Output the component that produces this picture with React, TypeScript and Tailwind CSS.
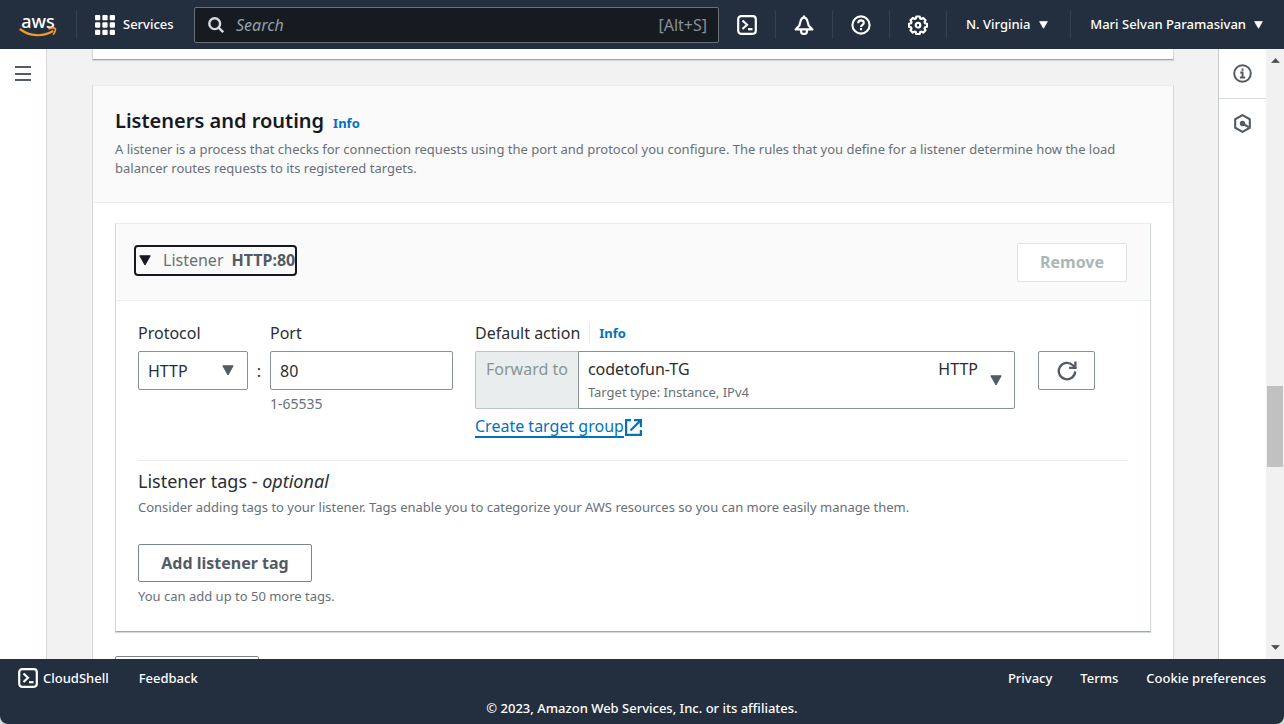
import React from 'react'

type IconProps = { className?: string }

function CloudShellIcon({ className }: IconProps) {
  return (
    <svg viewBox="0 0 20 20" className={className} fill="none" stroke="currentColor" strokeWidth="2.2" aria-hidden="true">
      <rect x="1.2" y="1.2" width="17.6" height="17.6" rx="3" />
      <path d="M5.5 5.500 10 9.800 5.500 14" />
      <path d="M11 14.200h4.500" />
    </svg>
  )
}

function BellIcon({ className }: IconProps) {
  return (
    <svg viewBox="0 0 20 20" className={className} fill="none" stroke="currentColor" strokeWidth="2.2" strokeLinejoin="round" aria-hidden="true">
      <path d="M10 0.500v2" />
      <path d="M10 2.600C7.600 2.600 6.900 4.400 6.300 7L5.400 10.400 1.600 14.400h16.800l-3.800-4L13.700 7C13.100 4.400 12.400 2.600 10 2.600Z" />
      <path d="M7 15v1a3 3 0 0 0 6 0v-1" />
    </svg>
  )
}

function HelpIcon({ className }: IconProps) {
  return (
    <svg viewBox="0 0 20 20" className={className} fill="none" stroke="currentColor" strokeWidth="2.1" aria-hidden="true">
      <circle cx="10" cy="10" r="8.600" />
      <path d="M7.200 8.200C7.200 6.400 8.400 5.400 10 5.400s2.800 1 2.800 2.600c0 1.800-2.800 2-2.800 4" />
      <path d="M10 13v2.200" />
    </svg>
  )
}

function GearIcon({ className }: IconProps) {
  return (
    <svg viewBox="0 0 20 20" className={className} fill="none" stroke="currentColor" strokeWidth="2.2" strokeLinejoin="round" aria-hidden="true">
      <path d="M8.300 1.500h3.400l.5 2 1.200.5 1.800-1 2.300 2.300-1 1.800.5 1.200 2 .5v2.900l-2 .6-.5 1.200 1 1.800-2.300 2.300-1.800-1-1.200.5-.5 2H8.300l-.5-2-1.200-.5-1.800 1-2.300-2.300 1-1.800-.5-1.200-2-.6V8.800l2-.5.5-1.200-1-1.800L4.800 3l1.800 1 1.200-.5Z" />
      <circle cx="10" cy="10.200" r="2.300" />
    </svg>
  )
}

function SearchIcon({ className }: IconProps) {
  return (
    <svg viewBox="0 0 16 16" className={className} fill="none" stroke="currentColor" strokeWidth="2.4" aria-hidden="true">
      <circle cx="6.700" cy="6.700" r="5.400" />
      <path d="m10.600 10.600 4.600 4.600" />
    </svg>
  )
}

function GridIcon({ className }: IconProps) {
  const cells = [0, 7, 14]
  return (
    <svg viewBox="0 0 19 19" className={className} fill="currentColor" aria-hidden="true">
      {cells.map(y => cells.map(x => <rect key={`${x}-${y}`} x={x} y={y} width="5" height="5" rx="1" />))}
    </svg>
  )
}

function Caret({ className }: IconProps) {
  return (
    <svg viewBox="0 0 12 11" preserveAspectRatio="none" className={className} fill="currentColor" stroke="currentColor" strokeLinejoin="round" aria-hidden="true">
      <path d="M0.800 0.800h10.400L6 10Z" />
    </svg>
  )
}

function InfoIcon({ className }: IconProps) {
  return (
    <svg viewBox="0 0 20 20" className={className} fill="none" stroke="currentColor" strokeWidth="2.100" aria-hidden="true">
      <circle cx="10" cy="10" r="8.700" />
      <path d="M10 4.800v2.400M7.600 9H10v5M7.200 14.200h5.600" />
    </svg>
  )
}

function HexagonIcon({ className }: IconProps) {
  return (
    <svg viewBox="0 0 20 20" className={className} fill="none" stroke="currentColor" strokeWidth="2.200" strokeLinejoin="round" aria-hidden="true">
      <path d="M10 1.200 17.700 5.500v9L10 18.800 2.300 14.500v-9Z" />
      <circle cx="10" cy="10" r="2.800" fill="currentColor" stroke="none" />
      <path d="m10 10 6.500 3.800" strokeWidth="2.400" />
    </svg>
  )
}

function RefreshIcon({ className }: IconProps) {
  return (
    <svg viewBox="0 0 20 20" className={className} fill="none" stroke="currentColor" strokeWidth="2.300" aria-hidden="true">
      <path d="M18.200 10.400A8.200 8.200 0 1 1 15.800 4.300L18 6.500" />
      <path d="M18.400 0.500v6.300h-6.300" />
    </svg>
  )
}

function ExternalIcon({ className }: IconProps) {
  return (
    <svg viewBox="0 0 17 17" className={className} fill="none" stroke="currentColor" strokeWidth="2.200" aria-hidden="true">
      <path d="M6 1.100H1.100v14.800h14.800V11" />
      <path d="M9 1.100h6.900V8M15.900 1.100 5.500 11.500" />
    </svg>
  )
}

function AwsLogo() {
  return (
    <span className="flex flex-col items-center">
      <span className="text-lg leading-5 font-medium">aws</span>
      <svg viewBox="0 0 38 11" className="-mt-1 h-[11px] w-[38px]" fill="none" stroke="#f29b26" strokeLinecap="round" aria-hidden="true">
        <path d="M1.500 2.500c9.500 7 22.500 7.600 32 1.800" strokeWidth="2.200" />
        <path d="M30 1.800c2.500-.9 5.500-.9 6.300-.2.500.8-.2 3.600-1.900 5.600" strokeWidth="1.600" />
      </svg>
    </span>
  )
}

const NAV_ACTIONS = [
  { label: 'CloudShell', Icon: CloudShellIcon },
  { label: 'Notifications', Icon: BellIcon },
  { label: 'Help', Icon: HelpIcon },
  { label: 'Settings', Icon: GearIcon }
]

function TopNav() {
  return (
    <header className="flex h-[49px] shrink-0 items-center bg-[#232f3e] text-[13px] whitespace-nowrap text-white">
      <a href="#home" className="flex h-7 w-[76px] shrink-0 items-center justify-center"><AwsLogo /></a>
      <button className="flex h-7 w-[118px] shrink-0 items-center gap-2 border-l border-[#354150] pl-[18px] font-medium">
        <GridIcon className="size-5" />
        Services
      </button>
      <label className="flex h-9 max-w-[525px] flex-1 items-center gap-3 rounded-xs border border-[#687078] bg-[#161b22] pr-[11px] pl-[13px] text-[#d5dbdb]">
        <SearchIcon className="size-4 shrink-0" />
        <input
          type="search"
          aria-label="Search"
          placeholder="Search"
          className="min-w-0 flex-1 bg-transparent text-base italic outline-none placeholder:text-[#95a0a3]"
        />
        <span className="text-base text-[#879196]">[Alt+S]</span>
      </label>
      <div className="flex shrink-0">
        {NAV_ACTIONS.map(({ label, Icon }) => (
          <button key={label} aria-label={label} className="flex h-7 w-[57px] items-center justify-center border-r border-[#354150]">
            <Icon className="size-5" />
          </button>
        ))}
      </div>
      <button className="flex h-7 items-center gap-2 px-[19px] font-medium">
        N. Virginia
        <Caret className="h-2 w-[9px]" />
      </button>
      <button className="ml-auto flex h-7 items-center gap-2 border-l border-[#354150] pr-[21px] pl-[19px] font-medium">
        Mari Selvan Paramasivan
        <Caret className="h-2 w-[9px]" />
      </button>
    </header>
  )
}

function ListenerForm() {
  return (
    <div className="flex items-start border-b border-[#eaeded] pb-[22px]">
      <div className="w-[110px]">
        <label htmlFor="protocol" className="block text-base leading-5">Protocol</label>
        <div className="relative mt-2">
          <select id="protocol" className="h-[39px] w-full appearance-none rounded-xs border border-[#879196] bg-white px-[9px] text-base">
            <option>HTTP</option>
          </select>
          <Caret className="pointer-events-none absolute top-[14px] right-[14px] h-[11px] w-3 text-[#545b64]" />
        </div>
      </div>
      <span className="mt-7 w-[22px] text-center text-base leading-10">:</span>
      <div className="w-[183px]">
        <label htmlFor="port" className="block text-base leading-5">Port</label>
        <input id="port" defaultValue="80" className="mt-2 h-[39px] w-full rounded-xs border border-[#879196] px-[9px] text-base" />
        <p className="mt-1 text-sm text-[#687078]">1-65535</p>
      </div>
      <div className="ml-[22px] flex-1">
        <div className="flex items-center leading-5">
          <span id="action-label" className="text-base leading-5">Default action</span>
          <a href="#action-info" className="ml-[9px] border-l border-[#eaeded] pl-[9px] text-[13px] leading-5 font-bold text-[#0073bb]">Info</a>
        </div>
        <div className="mt-2 flex h-[58px]">
          <span className="rounded-l-xs border border-r-0 border-[#bcc5c5] bg-[#eaeded] px-[10px] pt-[5px] text-base text-[#879596]">
            Forward to
          </span>
          <button
            aria-labelledby="action-label"
            aria-haspopup="listbox"
            className="flex flex-1 items-center rounded-r-xs border border-[#879196] pr-3 pl-[9px] text-left"
          >
            <span className="flex-1">
              <span className="flex justify-between text-base">
                <span>codetofun-TG</span>
                <span>HTTP</span>
              </span>
              <span className="block text-[13px] leading-[22px] text-[#687078]">Target type: Instance, IPv4</span>
            </span>
            <Caret className="ml-3 h-[11px] w-3 text-[#545b64]" />
          </button>
        </div>
        <a href="#target-groups" className="mt-[7px] inline-flex items-center gap-px text-base text-[#0073bb]">
          <span className="border-b-2 border-[#0073bb] leading-5">Create target group</span>
          <ExternalIcon className="size-[17px]" />
        </a>
      </div>
      <div className="mt-7 ml-[23px] w-[89px]">
        <button aria-label="Refresh target groups" className="flex h-[39px] w-[57px] items-center justify-center rounded-xs border border-[#879196] text-[#545b64]">
          <RefreshIcon className="size-5" />
        </button>
      </div>
    </div>
  )
}

function ListenerCard() {
  return (
    <section className="border border-t-[#eaeded] border-r-[#d5dbdb] border-b-[#a1a8a8] border-l-[#d5dbdb] bg-white shadow-[0_1px_1px_#d5dbdb]">
      <div className="flex h-[77px] items-center justify-between border-b border-[#eaeded] bg-[#fafafa] pr-[23px] pl-[18px]">
        <button
          aria-expanded="true"
          className="mb-1 flex h-[31px] items-center rounded-sm border-2 border-[#16191f] pl-[3px] text-base text-[#687078]"
        >
          <Caret className="mr-3 h-[11px] w-3 text-[#16191f]" />
          Listener
          <span className="ml-2 font-bold text-[#545b64]">HTTP:80</span>
        </button>
        <button disabled className="h-[39px] w-[110px] rounded-xs border border-[#e0e4e4] bg-white text-base font-bold text-[#aab7b8]">
          Remove
        </button>
      </div>
      <div className="pt-[22px] pr-[23px] pb-[25px] pl-[22px] text-[#2a2e33]">
        <ListenerForm />
        <h3 className="mt-2 text-lg leading-6">
          Listener tags - <i>optional</i>
        </h3>
        <p className="mt-1 text-[13px] leading-5 text-[#687078]">
          Consider adding tags to your listener. Tags enable you to categorize your AWS resources so you can more easily manage them.
        </p>
        <button className="mt-[27px] h-[38px] w-[174px] rounded-xs border border-[#7d858c] text-base font-bold text-[#545b64]">
          Add listener tag
        </button>
        <p className="mt-1 text-[13px] leading-5 text-[#687078]">You can add up to 50 more tags.</p>
      </div>
    </section>
  )
}

export default function App() {
  return (
    <div className="flex h-screen flex-col overflow-hidden bg-[#d5dbdb] font-['Noto_Sans',sans-serif] text-[#16191f]">
      <TopNav />
      <div className="flex min-h-0 flex-1 bg-[#f2f2f2]">
        <nav className="w-[47px] shrink-0 border-r border-[#d5dbdb] bg-white">
          <button aria-label="Open navigation" className="mt-[17px] ml-[15px] flex h-[15px] w-4 flex-col justify-between text-[#545b64]">
            <span className="h-[2px] w-full bg-current" />
            <span className="h-[2px] w-full bg-current" />
            <span className="h-[2px] w-full bg-current" />
          </button>
        </nav>

        <main className="min-w-0 flex-1 overflow-hidden pr-11 pl-[45px]">
          <div className="h-[11px] border border-t-0 border-[#d5dbdb] border-b-[#a1a8a8] bg-white shadow-[0_1px_1px_#d5dbdb]" />
          <section className="mt-[25px] border border-[#d5dbdb] border-t-[#eaeded] bg-white">
            <div className="border-b border-[#eaeded] bg-[#fafafa] px-[22px] pt-[21px] pb-6">
              <h2 className="text-xl leading-7 font-semibold">
                Listeners and routing
                <a href="#listener-info" className="ml-[9px] text-[13px] font-bold text-[#0073bb]">Info</a>
              </h2>
              <p className="mt-[3px] text-[13px] leading-[19px] text-[#687078]">
                A listener is a process that checks for connection requests using the port and protocol you configure. The rules that you define for a listener determine how the load balancer routes requests to its registered targets.
              </p>
            </div>
            <div className="px-[22px] pt-5">
              <ListenerCard />
              <button aria-label="Add listener" className="my-6 h-[38px] w-[144px] rounded-xs border border-[#7d858c]" />
            </div>
          </section>
        </main>

        <aside className="w-12 shrink-0 border-l border-[#c6cccc] bg-white text-[#545b64]">
          <button aria-label="Info panel" className="flex h-[50px] w-full items-center justify-center border-b border-[#d5dbdb]">
            <InfoIcon className="size-[19px]" />
          </button>
          <button aria-label="Diagnostics" className="flex h-[49px] w-full items-center justify-center">
            <HexagonIcon className="size-[19px]" />
          </button>
        </aside>

        {/* scroll track */}
        <div className="flex w-[18px] shrink-0 flex-col items-center bg-[#f1f1f1] py-[9px] text-[#505050]">
          <Caret className="h-[5px] w-[9px] rotate-180" />
          <div className="flex-[323]" />
          <div className="h-[81px] w-4 bg-[#c1c1c1]" />
          <div className="flex-[178]" />
          <Caret className="h-[5px] w-[9px]" />
        </div>
      </div>

      <footer className="h-[65px] shrink-0 rounded-b-lg bg-[#232f3e] px-[18px] pt-[9px] text-[13px] leading-5 font-medium text-white">
        <div className="flex items-center">
          <button className="flex items-center gap-[5px]">
            <CloudShellIcon className="size-5" />
            CloudShell
          </button>
          <a href="#feedback" className="ml-[30px]">Feedback</a>
          <div className="ml-auto flex gap-7">
            <a href="#privacy">Privacy</a>
            <a href="#terms">Terms</a>
            <a href="#cookies">Cookie preferences</a>
          </div>
        </div>
        <p className="mt-[10px] text-center">© 2023, Amazon Web Services, Inc. or its affiliates.</p>
      </footer>
    </div>
  )
}
